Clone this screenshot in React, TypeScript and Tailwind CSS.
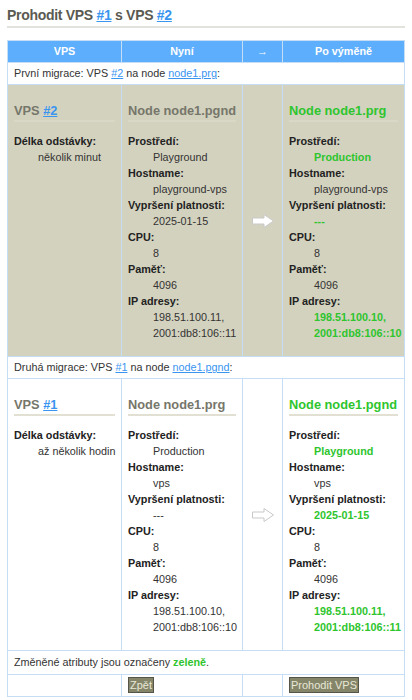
import React from "react";

type Item = { label: string; values: string[]; changed?: boolean };

type Side = { node: string; changed?: boolean; items: Item[] };

type Migration = {
  caption: string;
  vps: string;
  targetNode: string;
  downtime: string;
  shaded?: boolean;
  before: Side;
  after: Side;
};

const migrations: Migration[] = [
  {
    caption: "První",
    vps: "#2",
    targetNode: "node1.prg",
    downtime: "několik minut",
    shaded: true,
    before: {
      node: "Node node1.pgnd",
      items: [
        { label: "Prostředí:", values: ["Playground"] },
        { label: "Hostname:", values: ["playground-vps"] },
        { label: "Vypršení platnosti:", values: ["2025-01-15"] },
        { label: "CPU:", values: ["8"] },
        { label: "Paměť:", values: ["4096"] },
        { label: "IP adresy:", values: ["198.51.100.11,", "2001:db8:106::11"] },
      ],
    },
    after: {
      node: "Node node1.prg",
      changed: true,
      items: [
        { label: "Prostředí:", values: ["Production"], changed: true },
        { label: "Hostname:", values: ["playground-vps"] },
        { label: "Vypršení platnosti:", values: ["---"], changed: true },
        { label: "CPU:", values: ["8"] },
        { label: "Paměť:", values: ["4096"] },
        { label: "IP adresy:", values: ["198.51.100.10,", "2001:db8:106::10"], changed: true },
      ],
    },
  },
  {
    caption: "Druhá",
    vps: "#1",
    targetNode: "node1.pgnd",
    downtime: "až několik hodin",
    before: {
      node: "Node node1.prg",
      items: [
        { label: "Prostředí:", values: ["Production"] },
        { label: "Hostname:", values: ["vps"] },
        { label: "Vypršení platnosti:", values: ["---"] },
        { label: "CPU:", values: ["8"] },
        { label: "Paměť:", values: ["4096"] },
        { label: "IP adresy:", values: ["198.51.100.10,", "2001:db8:106::10"] },
      ],
    },
    after: {
      node: "Node node1.pgnd",
      changed: true,
      items: [
        { label: "Prostředí:", values: ["Playground"], changed: true },
        { label: "Hostname:", values: ["vps"] },
        { label: "Vypršení platnosti:", values: ["2025-01-15"], changed: true },
        { label: "CPU:", values: ["8"] },
        { label: "Paměť:", values: ["4096"] },
        { label: "IP adresy:", values: ["198.51.100.11,", "2001:db8:106::11"], changed: true },
      ],
    },
  },
];

function Link({ children }: { children: React.ReactNode }) {
  return <a href="#" className="text-[#3a95f0] underline">{children}</a>;
}

function Heading({ children, green, shaded }: { children: React.ReactNode; green?: boolean; shaded?: boolean }) {
  return (
    <h3
      className={`text-[12.8px] leading-[16px] font-bold whitespace-nowrap pb-[1px] border-b-2 ${
        shaded ? "border-[#d9d8c7]" : "border-[#e2e0d2]"
      } ${green ? "text-[#2ec52e]" : "text-[#76766a]"}`}
    >
      {children}
    </h3>
  );
}

function Attrs({ items }: { items: Item[] }) {
  return (
    <dl className="mt-[11px] leading-[16px] whitespace-nowrap">
      {items.map((it) => (
        <div key={it.label}>
          <dt className="font-bold text-[#222]">{it.label}</dt>
          {it.values.map((v) => (
            <dd
              key={v}
              className={`pl-[25px] ${it.changed ? "font-bold text-[#2ec52e]" : "text-[#333]"}`}
            >
              {v}
            </dd>
          ))}
        </div>
      ))}
    </dl>
  );
}

function Arrow() {
  return (
    <svg width="24" height="16" viewBox="0 0 24 16">
      <path
        d="M1.5 5 H13 V1.5 L22.5 8 L13 14.5 V11 H1.5 Z"
        fill="#ffffff"
        stroke="#c9c9c9"
        strokeWidth="1"
        strokeLinejoin="round"
      />
    </svg>
  );
}

function Button({ children }: { children: React.ReactNode }) {
  return (
    <button className="bg-[#85856a] text-[#e8e8d6] text-[11px] leading-[14px] px-[1px] border border-[#55554a]">
      {children}
    </button>
  );
}

const border = "border border-[#c6ddf6]";
const top = `${border} align-top`;
const mid = `${border} align-middle`;

export default function App() {
  return (
    <div className="bg-white font-['Liberation_Sans',Arial,sans-serif] text-[10.8px] text-[#333] px-[7px] pt-[5px] pb-[7px]">
      <h1 className="text-[14px] leading-[20px] font-bold tracking-[-0.3px] text-[#5a5a52] pb-[1px] border-b-2 border-[#e3e3de]">
        Prohodit VPS <Link>#1</Link> s VPS <Link>#2</Link>
      </h1>

      <table className="mt-[12px] w-full border-collapse table-fixed">
        <colgroup>
          <col className="w-[114px]" />
          <col className="w-[121px]" />
          <col className="w-[40px]" />
          <col />
        </colgroup>
        <thead>
          <tr className="bg-[#5daefd] text-white font-bold h-[22px]">
            <th className={mid}>VPS</th>
            <th className={mid}>Nyní</th>
            <th className={mid + " font-normal"}>→</th>
            <th className={mid}>Po výměně</th>
          </tr>
        </thead>
        <tbody>
          {migrations.map((m) => (
            <React.Fragment key={m.caption}>
              <tr>
                <td colSpan={4} className={mid + " h-[22px] px-[6px]"}>
                  {m.caption} migrace: VPS <Link>{m.vps}</Link> na node <Link>{m.targetNode}</Link>:
                </td>
              </tr>
              <tr className={m.shaded ? "bg-[#d3d2bf]" : "bg-white"}>
                <td className={top + " px-[6px] pt-[18px] pb-[15px]"}>
                  <Heading shaded={m.shaded}>
                    VPS <Link>{m.vps}</Link>
                  </Heading>
                  <dl className="mt-[11px] leading-[16px] whitespace-nowrap">
                    <dt className="font-bold text-[#222]">Délka odstávky:</dt>
                    <dd className="pl-[24px]">{m.downtime}</dd>
                  </dl>
                </td>
                <td className={top + " px-[6px] pt-[18px] pb-[15px]"}>
                  <Heading shaded={m.shaded}>{m.before.node}</Heading>
                  <Attrs items={m.before.items} />
                </td>
                <td className={mid}>
                  <div className="flex justify-center">
                    <Arrow />
                  </div>
                </td>
                <td className={top + " px-[6px] pt-[18px] pb-[15px]"}>
                  <Heading shaded={m.shaded} green={m.after.changed}>
                    {m.after.node}
                  </Heading>
                  <Attrs items={m.after.items} />
                </td>
              </tr>
            </React.Fragment>
          ))}
          <tr>
            <td colSpan={4} className={mid + " h-[24px] px-[6px]"}>
              Změněné atributy jsou označeny <span className="font-bold text-[#2ec52e]">zeleně</span>.
            </td>
          </tr>
          <tr className="h-[22px]">
            <td className={border} />
            <td className={mid + " px-[6px]"}>
              <Button>Zpět</Button>
            </td>
            <td className={border} />
            <td className={mid + " px-[6px]"}>
              <Button>Prohodit VPS</Button>
            </td>
          </tr>
        </tbody>
      </table>
    </div>
  );
}
